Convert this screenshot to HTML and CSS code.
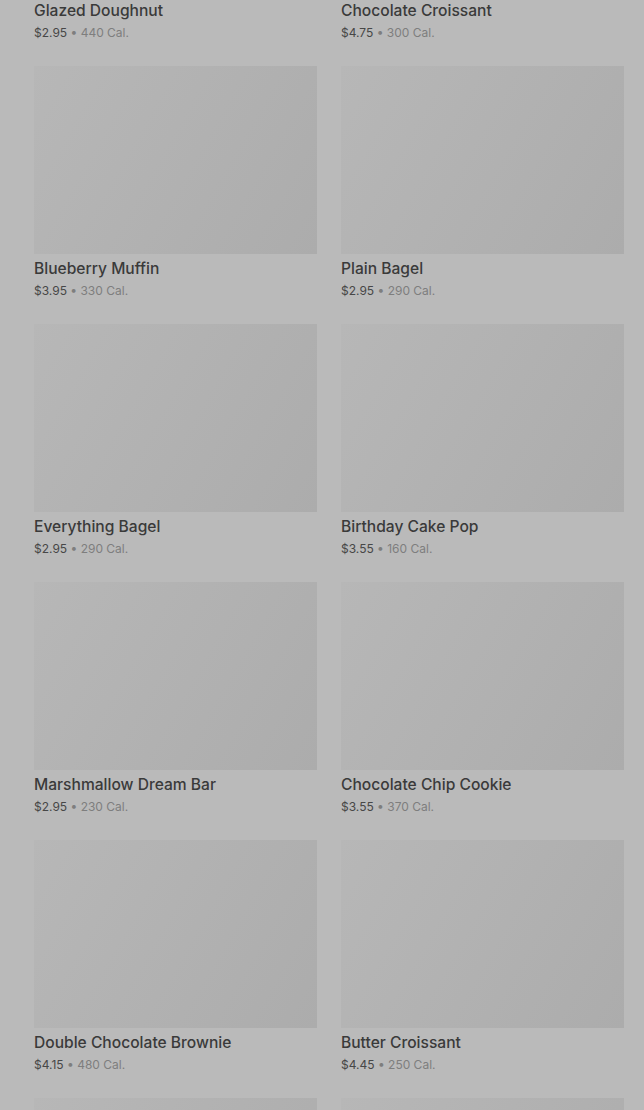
FILE: index.html
```html
<!DOCTYPE html>
<html>
<head>
<meta charset="utf-8">
<link rel="stylesheet" href="styles.css">
</head>
<body>
<main class="grid">
  <div class="card"><div class="thumb"></div><div class="name">Glazed Doughnut</div><div class="meta"><span class="price">$2.95</span> • 440 Cal.</div></div>
  <div class="card"><div class="thumb"></div><div class="name">Chocolate Croissant</div><div class="meta"><span class="price">$4.75</span> • 300 Cal.</div></div>
  <div class="card"><div class="thumb"></div><div class="name">Blueberry Muffin</div><div class="meta"><span class="price">$3.95</span> • 330 Cal.</div></div>
  <div class="card"><div class="thumb"></div><div class="name">Plain Bagel</div><div class="meta"><span class="price">$2.95</span> • 290 Cal.</div></div>
  <div class="card"><div class="thumb"></div><div class="name">Everything Bagel</div><div class="meta"><span class="price">$2.95</span> • 290 Cal.</div></div>
  <div class="card"><div class="thumb"></div><div class="name">Birthday Cake Pop</div><div class="meta"><span class="price">$3.55</span> • 160 Cal.</div></div>
  <div class="card"><div class="thumb"></div><div class="name">Marshmallow Dream Bar</div><div class="meta"><span class="price">$2.95</span> • 230 Cal.</div></div>
  <div class="card"><div class="thumb"></div><div class="name">Chocolate Chip Cookie</div><div class="meta"><span class="price">$3.55</span> • 370 Cal.</div></div>
  <div class="card"><div class="thumb"></div><div class="name">Double Chocolate Brownie</div><div class="meta"><span class="price">$4.15</span> • 480 Cal.</div></div>
  <div class="card"><div class="thumb"></div><div class="name">Butter Croissant</div><div class="meta"><span class="price">$4.45</span> • 250 Cal.</div></div>
  <div class="card"><div class="thumb"></div></div>
  <div class="card"><div class="thumb"></div></div>
</main>
</body>
</html>
```
FILE: styles.css
```css
html, body {
  margin: 0;
  padding: 0;
  background: #bababa;
  overflow: hidden;
  height: 1110px;
}
body {
  font-family: Inter, "Noto Sans", sans-serif;
  color: #3a3a3a;
}
.grid {
  display: grid;
  grid-template-columns: 283px 283px;
  column-gap: 24px;
  padding-left: 34px;
  margin-top: -192px;
}
.card {
  padding-bottom: 23px;
}
.thumb {
  height: 188px;
  background: linear-gradient(120deg, #b7b7b7 0%, #b2b2b2 45%, #acacac 100%);
}
.name {
  margin-top: 4px;
  font-size: 15.6px;
  line-height: 22px;
  font-weight: 500;
  color: #3a3a3a;
}
.meta {
  margin-top: 1px;
  font-size: 12px;
  line-height: 20px;
  color: #7e7e7e;
}
.price {
  color: #474747;
}
```
